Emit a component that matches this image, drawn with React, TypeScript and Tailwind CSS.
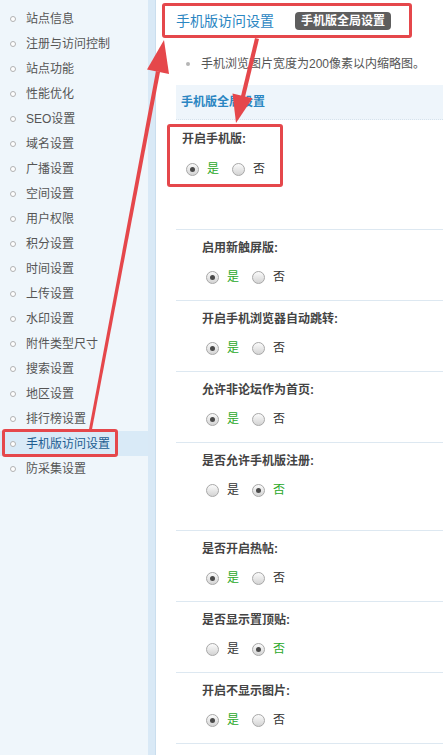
import React from "react";

const menu = [
  "站点信息",
  "注册与访问控制",
  "站点功能",
  "性能优化",
  "SEO设置",
  "域名设置",
  "广播设置",
  "空间设置",
  "用户权限",
  "积分设置",
  "时间设置",
  "上传设置",
  "水印设置",
  "附件类型尺寸",
  "搜索设置",
  "地区设置",
  "排行榜设置",
  "手机版访问设置",
  "防采集设置",
];

type Row = { label: string; yes: boolean; tall?: boolean };

const rows: Row[] = [
  { label: "启用新触屏版:", yes: true },
  { label: "开启手机浏览器自动跳转:", yes: true },
  { label: "允许非论坛作为首页:", yes: true },
  { label: "是否允许手机版注册:", yes: false, tall: true },
  { label: "是否开启热帖:", yes: true },
  { label: "是否显示置顶贴:", yes: false },
  { label: "开启不显示图片:", yes: true },
];

function Radio({ checked }: { checked: boolean }) {
  return (
    <span className="flex h-[13px] w-[13px] shrink-0 items-center justify-center rounded-full border border-[#a8a8a8] bg-linear-to-b from-[#fbfbfb] to-[#d4d4d4]">
      {checked && <span className="h-[5px] w-[5px] rounded-full bg-[#4a4a4a]" />}
    </span>
  );
}

function Radios({ yes }: { yes: boolean }) {
  return (
    <div className="flex h-[16px] items-center">
      <Radio checked={yes} />
      <span className={`ml-[8px] leading-[16px] ${yes ? "text-[#2aa82a]" : "text-[#333]"}`}>是</span>
      <span className="ml-[13px]">
        <Radio checked={!yes} />
      </span>
      <span className={`ml-[8px] leading-[16px] ${!yes ? "text-[#2aa82a]" : "text-[#333]"}`}>否</span>
    </div>
  );
}

export default function App() {
  return (
    <div className="relative flex h-[755px] w-[443px] overflow-hidden bg-white font-['Liberation_Sans','Noto_Sans_CJK_SC',sans-serif] text-[12px] text-[#333]">
      <aside className="w-[148px] shrink-0 bg-[#eff6fb] pt-[6px]">
        {menu.map((m) => {
          const active = m === "手机版访问设置";
          return (
            <div
              key={m}
              className={`relative flex h-[25px] items-center pl-[10px] ${active ? "bg-[#d9eaf7] text-[#215d91]" : "text-[#555]"}`}
            >
              <span className="h-[6px] w-[6px] rounded-full border border-[#b2b2b2] bg-white" />
              <span className="ml-[10px] leading-[14px]">{m}</span>
              {active && (
                <span className="absolute left-[2px] top-[-2px] h-[28px] w-[116px] rounded-[3px] border-[3px] border-[#e5474b]" />
              )}
            </div>
          );
        })}
      </aside>
      <div className="w-[8px] shrink-0 border-r border-[#cadeee] bg-[#d9e9f6]" />
      <main className="relative flex-1">
        <div className="flex h-[42px] items-center pl-[20px]">
          <span className="text-[14px] leading-[16px] text-[#2b86c2]">手机版访问设置</span>
          <span className="ml-[21px] flex h-[18px] items-center rounded-[4px] bg-[#5e5e5e] px-[6px] font-bold leading-[14px] text-white">
            手机版全局设置
          </span>
        </div>
        <span className="absolute left-[6px] top-[3px] h-[35px] w-[250px] rounded-[3px] border-[3px] border-[#e5474b]" />
        <div className="mt-[11px] flex h-[22px] items-center pl-[30px]">
          <span className="h-[4px] w-[4px] rounded-full bg-[#b5b5b5]" />
          <span className="ml-[11px] leading-[14px] text-[#555]">手机浏览图片宽度为200像素以内缩略图。</span>
        </div>
        <div className="ml-[20px] mt-[10px] flex h-[35px] items-center border-b border-dotted border-[#d6e2ec] bg-[#eef5fb] pl-[5px]">
          <span className="font-bold leading-[14px] text-[#2b86c2]">手机版全局设置</span>
        </div>
        <div className="relative ml-[20px] h-[109px] pl-[6px] pt-[12px]">
          <div className="font-bold leading-[14px] text-[#444]">开启手机版:</div>
          <div className="ml-[4px] mt-[15px]">
            <Radios yes={true} />
          </div>
          <span className="absolute left-[-9px] top-[4px] h-[63px] w-[116px] rounded-[3px] border-[3px] border-[#e5474b]" />
        </div>
        {rows.map((r) => (
          <div
            key={r.label}
            className={`ml-[20px] border-t border-[#dde8f1] pl-[26px] pt-[11px] ${r.tall ? "pb-[32px]" : "pb-[15px]"}`}
          >
            <div className="font-bold leading-[14px] text-[#444]">{r.label}</div>
            <div className="ml-[4px] mt-[14px]">
              <Radios yes={r.yes} />
            </div>
          </div>
        ))}
        <div className="ml-[20px] border-t border-[#dde8f1]" />
      </main>
      <svg
        className="pointer-events-none absolute left-0 top-0 z-10"
        width="443"
        height="755"
        viewBox="0 0 443 755"
      >
        <polygon points="88.5,432 91.5,432 160,72 156,71" fill="#e5474b" />
        <polygon points="164,40 147,69.5 169,74" fill="#e5474b" />
        <polygon points="255,38 259,39 245,97 241,96" fill="#e5474b" />
        <polygon points="236,123 232.5,93.4 252.5,98.2" fill="#e5474b" />
      </svg>
    </div>
  );
}
